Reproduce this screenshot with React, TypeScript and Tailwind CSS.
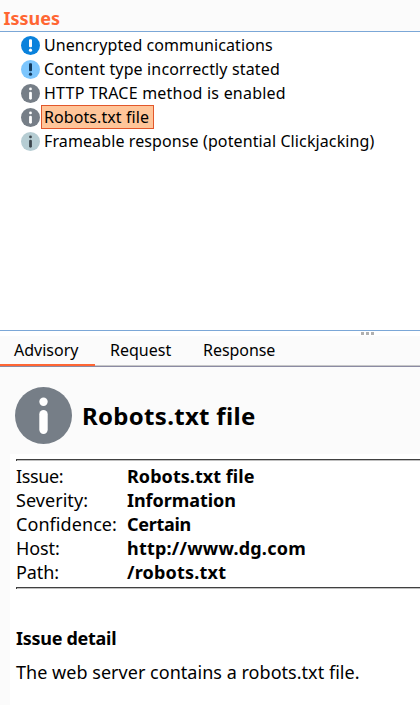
type IconKind = 'high' | 'low' | 'info' | 'faint';

const palette: Record<IconKind, { disc: string; mark: string }> = {
  high: { disc: '#0a82dc', mark: '#ffffff' },
  low: { disc: '#7dc6fd', mark: '#123a5e' },
  info: { disc: '#767e87', mark: '#ffffff' },
  faint: { disc: '#b6cdd3', mark: '#3c464c' },
};

function StatusIcon({ kind, className }: { kind: IconKind; className: string }) {
  const { disc, mark } = palette[kind];
  const alert = kind === 'high' || kind === 'low';
  return (
    <svg viewBox="0 0 57 57" className={className} aria-hidden="true">
      <circle cx="28.5" cy="28.5" r="28.5" fill={disc} />
      {alert ? (
        <>
          <rect x="24" y="10" width="9" height="24" rx="3" fill={mark} />
          <circle cx="28.5" cy="42.5" r="4.8" fill={mark} />
        </>
      ) : (
        <>
          <circle cx="28.5" cy="14.8" r="4.2" fill={mark} />
          <rect x="24.3" y="23" width="8.4" height="24" rx="4.2" fill={mark} />
        </>
      )}
    </svg>
  );
}

const issues: { kind: IconKind; text: string; spacing: string; selected?: boolean }[] = [
  { kind: 'high', text: 'Unencrypted communications', spacing: 'tracking-[0.08px]' },
  { kind: 'low', text: 'Content type incorrectly stated', spacing: 'tracking-[0.14px]' },
  { kind: 'info', text: 'HTTP TRACE method is enabled', spacing: 'tracking-[0.22px]' },
  { kind: 'info', text: 'Robots.txt file', spacing: 'tracking-[0.08px]', selected: true },
  { kind: 'faint', text: 'Frameable response (potential Clickjacking)', spacing: 'tracking-[0.11px]' },
];

const details = [
  { label: 'Issue:', value: 'Robots.txt file', ls: 'tracking-[-0.35px]', vs: 'tracking-[0.05px]' },
  { label: 'Severity:', value: 'Information', ls: 'tracking-[0.05px]', vs: 'tracking-[-0.05px]' },
  { label: 'Confidence:', value: 'Certain', ls: 'tracking-[0.07px]', vs: 'tracking-[-0.3px]' },
  { label: 'Host:', value: 'http://www.dg.com', ls: 'tracking-[-0.1px]', vs: 'tracking-[0.22px]' },
  { label: 'Path:', value: '/robots.txt', ls: 'tracking-[-0.1px]', vs: 'tracking-[0.2px]' },
];

function Rule() {
  return <div className="h-0.5 border-t border-l border-t-[#404040] border-l-[#404040] bg-[#c0c0c0]" />;
}

export default function App() {
  return (
    <div className="flex h-[705px] w-[420px] flex-col overflow-hidden bg-white font-['Noto_Sans','Open_Sans',sans-serif] text-base text-black">
      <header className="h-8 shrink-0 border-b border-[#7ba7d7] bg-[#fbfbfb] pt-1.5 pl-[3.5px]">
        <h1 className="text-lg leading-6 font-bold text-[#ff6633]">Issues</h1>
      </header>

      <ul className="h-[298px] shrink-0 pt-px pl-[21px]">
        {issues.map((issue) => (
          <li key={issue.text} className="flex h-6 items-center">
            <StatusIcon kind={issue.kind} className="mt-px size-[19px] shrink-0" />
            <span
              className={`ml-px flex h-6 items-center border pr-[3.5px] pl-0.5 leading-6 whitespace-nowrap ${issue.spacing} ${
                issue.selected ? 'border-[#e2572b] bg-[#ffc599]' : 'border-transparent'
              }`}
            >
              {issue.text}
            </span>
          </li>
        ))}
      </ul>

      <div className="flex h-1.5 shrink-0 items-center border-t border-[#7ba7d7] pl-[361px]">
        <div className="flex gap-0.5">
          <i className="size-[3px] bg-[#b0b0b0]" />
          <i className="size-[3px] bg-[#b0b0b0]" />
          <i className="size-[3px] bg-[#b0b0b0]" />
        </div>
      </div>

      <nav className="flex h-[31px] shrink-0 border-b border-[#8b8ba3] bg-[#fbfbfb] leading-[28px]">
        <div className="w-[95px] border-b-2 border-[#ff6633] pl-3.5">Advisory</div>
        <div className="w-[94px] border-b border-[#c8c8c8] pl-[15px]">Request</div>
        <div className="grow border-b border-[#c8c8c8] pl-3.5 tracking-[-0.05px]">Response</div>
      </nav>

      <section className="flex grow flex-col bg-[#fbfbfb]">
        <div className="flex h-[87px] shrink-0 items-center pt-2.5 pl-[15px]">
          <StatusIcon kind="info" className="size-[57px] shrink-0" />
          <h2 className="ml-2.5 text-2xl leading-8 font-bold tracking-[0.3px]">Robots.txt file</h2>
        </div>
        <div className="ml-2.5 grow bg-white pt-[5px] pl-1.5 text-lg leading-6">
          <Rule />
          <dl className="grid grid-cols-[111px_1fr] pt-[3px] pb-[3px]">
            {details.map((row) => (
              <div key={row.label} className="contents">
                <dt className={row.ls}>{row.label}</dt>
                <dd className={`font-bold ${row.vs}`}>{row.value}</dd>
              </div>
            ))}
          </dl>
          <Rule />
          <h3 className="pt-[37px] font-bold tracking-[-0.28px]">Issue detail</h3>
          <p className="pt-2.5 tracking-[0.03px]">The web server contains a robots.txt file.</p>
        </div>
      </section>
    </div>
  );
}
